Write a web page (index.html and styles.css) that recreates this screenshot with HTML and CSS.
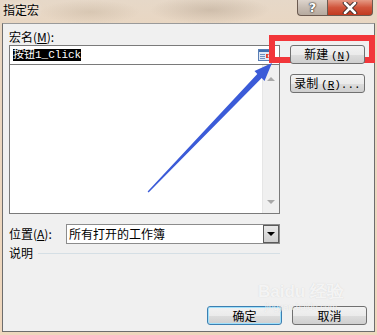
FILE: index.html
```html
<!DOCTYPE html>
<html lang="zh">
<head>
    <meta charset="UTF-8">
    <title>指定宏</title>
    <link rel="stylesheet" href="styles.css">
</head>
<body>
    <div class="window">
        <div class="titlebar">
            <span class="title">指定宏</span>
            <div class="caption-buttons">
                <span class="cap-btn help">?</span>
                <span class="cap-btn close">
                    <svg width="16" height="12" viewBox="0 0 16 12"><path d="M3 1 L13 11 M13 1 L3 11" stroke="#3a2a28" stroke-width="4.5" stroke-linecap="round"/><path d="M3 1 L13 11 M13 1 L3 11" stroke="#fff" stroke-width="2.6" stroke-linecap="round"/></svg>
                </span>
            </div>
        </div>

        <!-- red annotation frame, drawn under the 新建 button -->
        <div class="red-box"></div>

        <div class="client">
            <div class="main">
                <div class="left">
                    <div class="label">宏名(<u>M</u>):</div>
                    <div class="name-input">
                        <span class="selected">按钮<span class="mono">1_Click</span></span>
                        <svg class="ref-icon" width="13" height="12" viewBox="0 0 13 12">
                            <rect x="0.5" y="0.5" width="12" height="11" fill="#dfe8f5" stroke="#5a7fb5"/>
                            <rect x="1" y="1" width="11" height="2" fill="#3e6db0"/>
                            <path d="M2 5.5h5M2 7.5h5M2 9.5h5" stroke="#6f8fc0"/>
                            <path d="M8 5h3l-1.5 2 1.5 2h-3z" fill="#e0402a"/>
                        </svg>
                    </div>
                    <div class="macro-list">
                        <div class="list-body"></div>
                        <div class="scrollbar">
                            <span class="arrow-up"></span>
                            <span class="arrow-down"></span>
                        </div>
                    </div>
                    <div class="location-row">
                        <span class="label">位置(<u>A</u>):</span>
                        <div class="combo">
                            <span class="combo-text">所有打开的工作簿</span>
                            <span class="combo-btn"><span class="tri"></span></span>
                        </div>
                    </div>
                    <div class="desc-row">
                        <span class="label">说明</span>
                        <span class="rule"></span>
                    </div>
                </div>
                <div class="right">
                    <button class="btn btn-new">新建 <span class="mono">(<u>N</u>)</span></button>
                    <button class="btn">录制 <span class="mono">(<u>R</u>)...</span></button>
                </div>
            </div>
            <div class="footer">
                <button class="btn btn-default">确定</button>
                <button class="btn">取消</button>
            </div>
        </div>

        <svg class="pointer" width="377" height="335" viewBox="0 0 377 335">
            <polygon points="147.6,191.6 257.3,73.9 254.5,71.1 272,63 264.5,80.9 261.7,78.1 148.6,192.4" fill="#3b5bd8"/>
        </svg>
        <div class="watermark">
            <span class="wm-logo">Bai<b>du</b> 经验</span>
            <span class="wm-url">jingyan.baidu.com</span>
        </div>
    </div>
</body>
</html>
```

FILE: styles.css
```css
body {
    margin: 0;
    font-family: "Noto Sans CJK SC", sans-serif;
    font-size: 12px;
    color: #000;
    background: #e6d3bd;
}

.window {
    position: relative;
    width: 377px;
    height: 335px;
    overflow: hidden;
    background:
        radial-gradient(ellipse 60px 14px at 210px 10px, rgba(150, 130, 110, 0.3), transparent),
        radial-gradient(ellipse 50px 12px at 90px 12px, rgba(170, 150, 125, 0.25), transparent),
        linear-gradient(#e6d8c8, #e9d6c1 30px, #efd7bd);
}

.titlebar {
    height: 23px;
    display: flex;
    align-items: flex-start;
}

.title {
    padding: 3px 0 0 3px;
    line-height: 14px;
    font-size: 12px;
    color: #000;
    text-shadow: 0 0 5px rgba(255, 255, 255, 0.8);
}

.caption-buttons {
    margin-left: auto;
    margin-right: 4px;
    display: flex;
    height: 16px;
}

.cap-btn {
    display: flex;
    align-items: center;
    justify-content: center;
    height: 15px;
    border: 1px solid #6b5a50;
    border-top: none;
}

.help {
    width: 29px;
    border-radius: 0 0 0 4px;
    border-right: none;
    background: linear-gradient(#ddd4cc, #c7bcb2 50%, #b6aa9f);
    color: #fff;
    font-family: "DejaVu Sans", sans-serif;
    font-weight: bold;
    font-size: 13px;
    text-shadow: 0 0 1px #333, 0 0 1px #333, 0 0 2px #333;
}

.close {
    width: 44px;
    border-radius: 0 0 4px 0;
    background: linear-gradient(#e59a85, #d1553c 50%, #c13b22);
}

.client {
    margin-left: 2px;
    width: 371px;
    height: 307px;
    border: 1px solid #6d6d6d;
    border-top-color: #9a9a9a;
    background: #f0f0f0;
    display: flex;
    flex-direction: column;
}

.main {
    display: grid;
    grid-template-columns: 271px 75px;
    column-gap: 10px;
    padding: 6px 0 0 6px;
}

.label {
    line-height: 14px;
    white-space: nowrap;
}

.left > .label {
    margin-bottom: 1px;
}

.mono {
    font-family: "Liberation Mono", monospace;
}

.name-input {
    height: 16px;
    border: 1px solid #7a7a7a;
    border-bottom: none;
    background: #fff;
    display: flex;
    align-items: center;
    padding: 1px 2px 1px 3px;
}

.selected {
    background: #000;
    color: #fff;
    font-size: 11px;
    line-height: 12px;
    font-family: "Liberation Mono", "Noto Sans CJK SC", monospace;
}

.ref-icon {
    margin-left: auto;
    margin-right: 6px;
}

.macro-list {
    height: 148px;
    border: 1px solid #7a7a7a;
    background: #fff;
    display: flex;
}

.list-body {
    flex: 1;
}

.scrollbar {
    width: 16px;
    background: #f0f0f0;
    border-left: 1px solid #e6e6e6;
    display: flex;
    flex-direction: column;
    justify-content: space-between;
    align-items: center;
    padding: 12px 0 9px;
}

.arrow-up,
.arrow-down {
    width: 0;
    height: 0;
    border-left: 4px solid transparent;
    border-right: 4px solid transparent;
}

.arrow-up {
    border-bottom: 4px solid #a8a8a8;
}

.arrow-down {
    border-top: 4px solid #a8a8a8;
}

.location-row {
    margin-top: 10px;
    display: flex;
    align-items: center;
}

.location-row .label {
    width: 57px;
}

.combo {
    flex: 1;
    height: 18px;
    border: 1px solid #8c8c8c;
    background: #fff;
    display: flex;
    align-items: center;
}

.combo-text {
    padding-left: 2px;
    line-height: 14px;
}

.combo-btn {
    margin-left: auto;
    width: 14px;
    height: 16px;
    border: 1px solid #5a5a5a;
    background: linear-gradient(#e8e8e8, #cfcfcf);
    display: flex;
    align-items: center;
    justify-content: center;
}

.tri {
    width: 0;
    height: 0;
    border-left: 4px solid transparent;
    border-right: 4px solid transparent;
    border-top: 4px solid #000;
}

.desc-row {
    margin-top: 2px;
    display: flex;
    align-items: center;
}

.rule {
    flex: 1;
    height: 1px;
    margin-left: 5px;
    background: #d5dfe5;
}

.right {
    display: flex;
    flex-direction: column;
    gap: 10px;
    padding-top: 15px;
}

.btn {
    height: 19px;
    width: 75px;
    padding: 0;
    border: 1px solid #707070;
    border-radius: 3px;
    background: linear-gradient(#f2f2f2, #ebebeb 50%, #dddddd 51%, #cfcfcf);
    font-family: "Noto Sans CJK SC", sans-serif;
    font-size: 12px;
    line-height: 14px;
    color: #000;
    white-space: nowrap;
}

.btn .mono {
    font-size: 11px;
}

/* stacked above the red frame */
.btn-new {
    position: relative;
}

.btn-default {
    border-color: #3c7fb1;
    box-shadow: inset 0 0 0 1px #9fe0fb;
}

.footer {
    margin-top: auto;
    padding: 0 7px 6px 0;
    display: flex;
    justify-content: flex-end;
    gap: 10px;
}

.red-box {
    position: absolute;
    left: 269px;
    top: 35px;
    width: 94px;
    height: 16px;
    border: 6px solid #f2363a;
}

.pointer {
    position: absolute;
    left: 0;
    top: 0;
}

.watermark {
    position: absolute;
    left: 258px;
    top: 282px;
    display: flex;
    flex-direction: column;
    align-items: center;
    color: rgba(255, 255, 255, 0.75);
    text-shadow: 0 0 1px rgba(150, 150, 150, 0.35);
}

.wm-logo {
    font-family: "Liberation Sans", sans-serif;
    font-size: 17px;
    font-weight: bold;
    line-height: 20px;
}

.wm-url {
    font-family: "Liberation Sans", sans-serif;
    font-size: 9px;
    line-height: 10px;
}
```
